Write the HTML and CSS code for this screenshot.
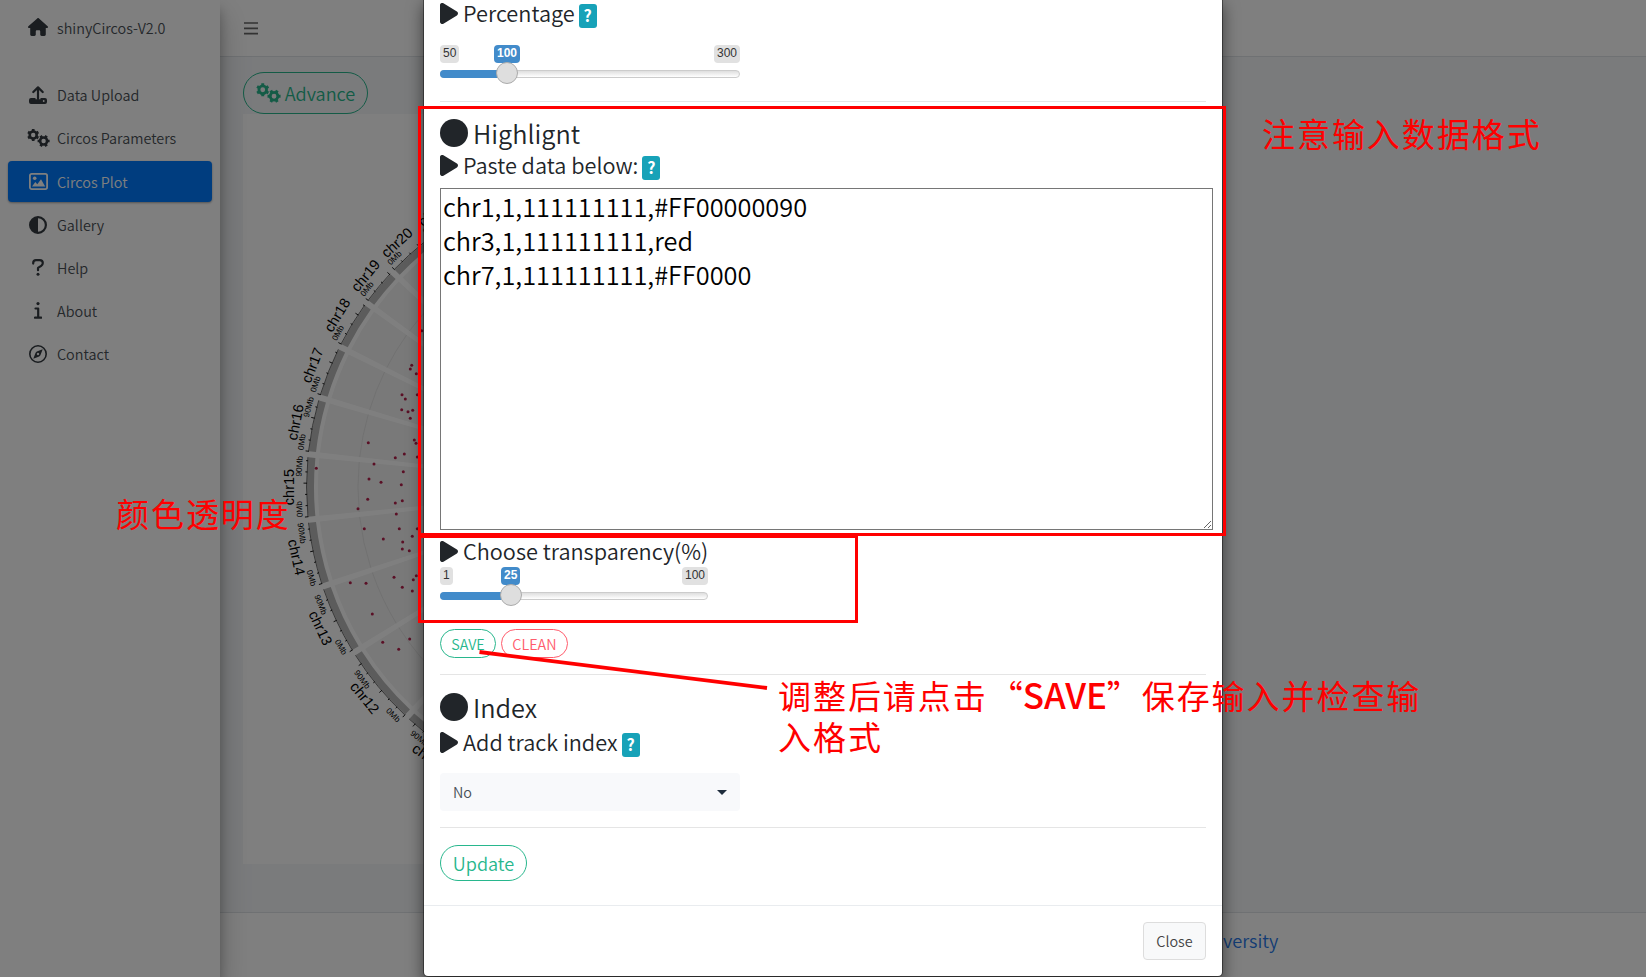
FILE: index.html
```html
<!DOCTYPE html>
<html lang="en">
<head>
<meta charset="utf-8">
<title>shinyCircos-V2.0</title>
<link rel="stylesheet" href="styles.css">
</head>
<body>
<svg class="defs" width="0" height="0" aria-hidden="true">
  <symbol id="play" viewBox="0 32 384 448"><path d="M73 39c-14.800-9.100-33.400-9.400-48.500-.9S0 62.600 0 80V432c0 17.400 9.400 33.400 24.500 41.900s33.700 8.100 48.500-.9L361 297c14.300-8.700 23-24.200 23-41s-8.700-32.200-23-41L73 39z"/></symbol>
  <symbol id="gears" viewBox="0 0 23 18">
    <g fill="none" stroke="currentColor">
      <circle cx="6.200" cy="6" r="3.500" stroke-width="2.600"/>
      <path d="M6.200 0v2.200M6.200 9.800V12M1 3l1.900 1.100M9.500 7.900L11.400 9M1 9l1.900-1.100M9.500 4.100L11.400 3" stroke-width="2.700"/>
      <circle cx="16.600" cy="12" r="3.500" stroke-width="2.600"/>
      <path d="M10.600 12h2.200M20.400 12h2.200M13.600 6.800l1.100 1.900M18.500 15.300l1.100 1.900M13.600 17.200l1.100-1.900M18.500 8.700l1.100-1.900" stroke-width="2.700"/>
    </g>
  </symbol>
</svg>
<div class="app">
  <aside class="sidebar">
    <div class="brand"><span class="ico"><svg width="20" height="18" viewBox="0 0 576 512"><path d="M575.800 255.500c0 18-15 32.100-32 32.100h-32l.7 160.200c0 2.700-.2 5.400-.5 8.100V472c0 22.100-17.900 40-40 40H392c-22.100 0-40-17.900-40-40V384c0-17.700-14.300-32-32-32H256c-17.700 0-32 14.300-32 32v88c0 22.100-17.900 40-40 40H104c-22.100 0-40-17.900-40-40V287.600H32c-18 0-32-14-32-32.100c0-9 3-17 10-24L266.400 8c7-7 15-8 22-8s15 2 21 7L564.800 231.500c8 7 12 15 11 24z"/></svg></span>shinyCircos-V2.0</div>
    <nav class="nav">
      <a class="item"><span class="ico"><svg width="18" height="18" viewBox="0 0 18 18"><path d="M2 12h4.500v1.200h5V12H16q2 0 2 2v2q0 2-2 2H2q-2 0-2-2v-2q0-2 2-2z"/><circle cx="14.700" cy="15" r=".9" fill="#fff"/><path d="M9 13V2M4.300 6L9 1.400 13.700 6" fill="none" stroke="currentColor" stroke-width="2.200" stroke-linecap="round" stroke-linejoin="round"/></svg></span>Data Upload</a>
      <a class="item"><span class="ico"><svg width="23" height="18"><use href="#gears"/></svg></span>Circos Parameters</a>
      <a class="item active"><span class="ico"><svg width="19" height="17" viewBox="0 0 19 17"><rect x=".9" y=".9" width="17.200" height="15.200" rx="1.800" fill="none" stroke="currentColor" stroke-width="1.800"/><circle cx="5.700" cy="5.300" r="1.800"/><path d="M3 13.500L6.300 9l2 2.200 3.700-5 4.200 7.300z"/></svg></span>Circos Plot</a>
      <a class="item"><span class="ico"><svg width="18" height="18" viewBox="0 0 512 512"><path fill-rule="evenodd" d="M448 256c0-106-86-192-192-192V448c106 0 192-86 192-192zM0 256a256 256 0 1 1 512 0A256 256 0 1 1 0 256z"/></svg></span>Gallery</a>
      <a class="item"><span class="ico"><svg width="12" height="17" viewBox="0 0 12 17"><path d="M1.200 4.600V4q0-2.800 2.800-2.800h3.700Q10.800 1.200 10.800 4q0 1.700-1.600 2.800L6 8.900v2.300" fill="none" stroke="currentColor" stroke-width="2.200" stroke-linecap="round" stroke-linejoin="round"/><circle cx="6" cy="15.200" r="1.500"/></svg></span>Help</a>
      <a class="item"><span class="ico"><svg width="8" height="17" viewBox="0 0 8 17"><circle cx="4" cy="1.600" r="1.600"/><path d="M1.500 6.500H4.200V15.400M1 15.600h6.200" fill="none" stroke="currentColor" stroke-width="2.200" stroke-linecap="round" stroke-linejoin="round"/></svg></span>About</a>
      <a class="item"><span class="ico"><svg width="18" height="18" viewBox="0 0 18 18"><circle cx="9" cy="9" r="8.200" fill="none" stroke="currentColor" stroke-width="1.600"/><path fill-rule="evenodd" d="M13.700 4.300l-2.300 5.900-1.200 1.200-5.900 2.300 2.300-5.900 1.200-1.200zM9 7.800a1.200 1.200 0 1 0 .01 0z"/></svg></span>Contact</a>
    </nav>
  </aside>
  <div class="page">
    <header class="topbar"><svg width="14" height="13" viewBox="0 0 14 13"><path d="M0 1h14M0 6.300h14M0 11.600h14" stroke="#666" stroke-width="1.700"/></svg></header>
    <main class="content">
      <button class="pill advance"><svg width="25" height="20"><use href="#gears"/></svg><span>Advance</span></button>
      <div class="plot">
        <svg id="circos" width="600" height="750" viewBox="243 114 600 750"></svg>
      </div>
    </main>
    <footer class="foot"><a>versity</a></footer>
  </div>
</div>
<div class="backdrop"></div>

<div class="modal">
  <div class="body">
    <div class="line first"><svg class="tri"><use href="#play"/></svg><span>Percentage</span><b class="q">?</b></div>
    <div class="slider s1">
      <div class="labels"><i>50</i><i class="val">100</i><i>300</i></div>
      <div class="track"><div class="fill"></div><div class="knob"></div></div>
    </div>
    <hr>
    <div class="head h1"><span class="dot"></span>Highlignt</div>
    <div class="line l2"><svg class="tri"><use href="#play"/></svg><span>Paste data below:</span><b class="q">?</b></div>
    <textarea class="data" spellcheck="false">chr1,1,111111111,#FF00000090
chr3,1,111111111,red
chr7,1,111111111,#FF0000</textarea>
    <div class="line l3"><svg class="tri"><use href="#play"/></svg><span>Choose transparency(%)</span></div>
    <div class="slider s2">
      <div class="labels"><i>1</i><i class="val">25</i><i>100</i></div>
      <div class="track"><div class="fill"></div><div class="knob"></div></div>
    </div>
    <div class="actions"><button class="pill small save">SAVE</button><button class="pill small clean">CLEAN</button></div>
    <hr>
    <div class="head h2"><span class="dot"></span>Index</div>
    <div class="line l4"><svg class="tri"><use href="#play"/></svg><span>Add track index</span><b class="q">?</b></div>
    <div class="select"><span>No</span><span class="caret"></span></div>
    <hr>
    <button class="pill update">Update</button>
  </div>
  <div class="mfoot"><button class="close">Close</button></div>
</div>

<div class="mark box1"></div>
<div class="mark box2"></div>
<svg class="arrow" width="300" height="50" viewBox="475 645 300 50"><path d="M479.500 652L767 688" stroke="#f00" stroke-width="3.800"/></svg>
<div class="note n1">注意输入数据格式</div>
<div class="note n2">颜色透明度</div>
<div class="note n3"><div>调整后请点击<span class="qt ql">“</span><span class="lat">SAVE</span><span class="qt">”</span>保存输入并检查输</div><div>入格式</div></div>
<script src="plot.js"></script>
</body>
</html>
```
FILE: styles.css
```css
* { box-sizing: border-box; }
body { margin: 0; width: 1646px; height: 977px; overflow: hidden; font: 14.4px/24px "Noto Sans CJK SC DemiLight", "Noto Sans CJK SC", sans-serif; color: #212529; }
.defs { position: absolute; }
svg { display: block; fill: currentColor; flex: none; }
button { font-family: inherit; margin: 0; }
.app { display: flex; height: 977px; }
.sidebar { width: 220px; background: #fff; color: #4a5056; box-shadow: 0 14px 28px rgba(0,0,0,.25), 0 10px 10px rgba(0,0,0,.22); z-index: 1; }
.brand { height: 57px; padding: 0 0 2px 18px; display: flex; align-items: center; }
.ico { width: 39px; display: flex; justify-content: center; color: #343a40; }
.nav { padding: 18px 8px 0; display: flex; flex-direction: column; gap: 3px; }
.item { height: 40px; padding-left: 10px; display: flex; align-items: center; border-radius: 4px; }
.ico svg { margin-left: 1px; margin-bottom: 1px; }
.active { height: 41px; color: #fff; background: #007bff; box-shadow: 0 1px 3px rgba(0,0,0,.12), 0 1px 2px rgba(0,0,0,.24); }
.active .ico { color: #fff; }
.page { flex: 1; display: flex; flex-direction: column; background: #f4f6f9; }
.topbar { height: 57px; background: #fff; border-bottom: 1px solid #dee2e6; padding: 22px 24px; }
.content { flex: 1; padding: 15px 23px 0; }
.pill { display: flex; align-items: center; justify-content: center; background: none; border: 1px solid #28b78d; color: #28b78d; border-radius: 30px; padding: 0; }
.advance { height: 42px; width: 125px; font-size: 18.1px; gap: 4px; padding: 0 0 1px; }
.plot { width: 760px; height: 750px; background: #fff; }
.foot { height: 65px; border-top: 1px solid #dee2e6; background: #fff; font-size: 18.2px; padding: 15px 0 0 1003px; }
.foot a { color: #2879e8; }
.backdrop { position: absolute; inset: 0; background: rgba(0,0,0,.5); z-index: 2; }

.modal { position: absolute; z-index: 3; left: 423px; top: -4px; width: 800px; height: 981px; background: #fff; background-clip: padding-box; border: 1px solid rgba(0,0,0,.4); border-radius: 5px; box-shadow: 0 8px 16px rgba(0,0,0,.5); display: flex; flex-direction: column; }
.body { padding: 3px 16px 0; height: 908px; display: flex; flex-direction: column; align-items: flex-start; }
hr { margin: 0; width: 766px; height: 1px; flex: none; border: 0; background: #e5e5e5; }
.line { display: flex; height: 28px; font-size: 21.700px; line-height: 28px; align-items: center; }
.line span { margin-bottom: 2px; }
.tri { width: 18px; height: 21px; margin-right: 5px; margin-bottom: 1px; color: #212529; }
.q { width: 18px; height: 24px; border-radius: 3px; background: #17a2b8; color: #fff; font: 700 16px/22px "Noto Sans CJK SC", sans-serif; text-align: center; margin: 4px 0 0 4px; }
.slider { display: flex; flex-direction: column; font: 12px/15px "Liberation Sans", sans-serif; }
.s1 { margin-top: 17px; width: 300px; height: 56px; }
.s2 { margin-top: 1px; width: 268px; height: 62px; }
.labels { display: grid; grid-template-columns: 1fr auto 1fr; height: 18px; position: relative; }
.labels i { font-style: normal; background: #e1e1e1; color: #333; border-radius: 4px; padding: 1px 3px; height: 18px; justify-self: start; }
.labels i:last-child { justify-self: end; grid-column: 3; }
.labels .val { position: absolute; background: #428bca; color: #fff; font-weight: 700; }
.s1 .val { left: 54px; width: 26px; }
.s2 .val { left: 61px; width: 19px; }
.track { position: relative; margin-top: 7px; height: 8px; border: 1px solid #ccc; border-radius: 8px; background: linear-gradient(#dedede, #fff); }
.fill { position: absolute; left: -1px; top: -1px; height: 8px; border-radius: 8px 0 0 8px; background: #428bca; width: 67px; }
.knob { position: absolute; width: 22px; height: 22px; border-radius: 50%; background: #dedede; border: 1px solid #ababab; top: -9px; left: 55px; }
.s2 .knob { left: 59px; }
.head { display: flex; align-items: center; gap: 5px; font-size: 25.300px; line-height: 34px; height: 34px; }
.dot { width: 28px; height: 28px; border-radius: 50%; background: #212529; }
.h1 { margin-top: 14px; }
.l2 { margin-top: 2px; }
.data { width: 773px; height: 342px; flex: none; margin: 8px 0 0; padding: 0 2px; border: 1px solid #767676; font: 25.350px/34px "Noto Sans CJK SC DemiLight", "Noto Sans CJK SC", sans-serif; color: #000; outline: 0; }
.l3 { margin-top: 8px; }
.actions { display: flex; gap: 5px; height: 45px; }
.small { height: 29px; width: 56px; font-size: 14.400px; }
.clean { width: 67px; color: #ff5c6c; border-color: #ff5c6c; }
.h2 { margin-top: 15px; }
.l4 { margin-top: 5px; }
.select { margin: 16px 0; width: 300px; height: 38px; border-radius: 4px; background: #f8f9fb; display: flex; align-items: center; justify-content: space-between; padding: 0 13px; color: #495057; }
.caret { border: 5px solid transparent; border-top-color: #1f2d3d; border-bottom: 0; }
.update { margin-top: 17px; width: 87px; height: 36px; font-size: 18.1px; padding-bottom: 1px; }
.mfoot { border-top: 1px solid #e9ecef; flex: 1; display: flex; justify-content: flex-end; padding: 16px 16px 0; }
.close { width: 63px; height: 38px; background: #f8f9fa; border: 1px solid #ddd; border-radius: 4px; color: #444; font-size: 14.400px; padding: 0 0 2px; }

.mark { position: absolute; z-index: 4; border: 3px solid #f00; }
.box1 { left: 418px; top: 106px; width: 808px; height: 430px; }
.box2 { left: 418px; top: 535px; width: 440px; height: 88px; }
.arrow { position: absolute; z-index: 5; left: 475px; top: 645px; }
.note { position: absolute; z-index: 5; color: #f00; font-family: "Noto Sans CJK SC", sans-serif; font-size: 33px; letter-spacing: 1.950px; line-height: 41px; white-space: nowrap; }
.n1 { left: 1262px; top: 113px; }
.n2 { left: 116px; top: 493px; }
.n3 { left: 778px; top: 674px; }
.lat { letter-spacing: 0; font-weight: 500; display: inline-block; width: 84px; font-size: 35px; line-height: 40px; }
.qt { display: inline-block; width: 35px; letter-spacing: 0; }
.ql { text-align: right; }
```
FILE: plot.js
```js
const svg = document.getElementById('circos');
const CX = 620, CY = 487, R = 313;
// Sector boundaries in degrees above the left horizontal
const gaps = [59, 51.8, 43.4, 36, 26.6, 16.6, 6, -6, -18.5, -31.9, -47.2, -62];
const names = ['chrX', 'chr20', 'chr19', 'chr18', 'chr17', 'chr16', 'chr15', 'chr14', 'chr13', 'chr12', 'chr11'];
// Angular distance of the 90Mb tick from the upper end of each sector
const mark90 = { chr16: 1.65, chr15: 1.75, chr14: 1.7, chr13: 2.4, chr12: 4.3, chr11: 3.7 };
const at = (r, a) => {
  const t = a * Math.PI / 180;
  return [CX - r * Math.cos(t), CY - r * Math.sin(t)];
};
const add = (tag, attrs, text) => {
  const el = document.createElementNS('http://www.w3.org/2000/svg', tag);
  for (const k in attrs) el.setAttribute(k, attrs[k]);
  if (text) el.textContent = text;
  svg.append(el);
};
const ring = (r1, r2, a, b, fill) => {
  const p = [at(r1, a), at(r1, b), at(r2, b), at(r2, a)];
  add('path', { fill, d: `M${p[0]}A${r1} ${r1} 0 0 0 ${p[1]}L${p[2]}A${r2} ${r2} 0 0 1 ${p[3]}Z` });
};
const label = (s, r, a, size) => {
  const [x, y] = at(r, a);
  const rot = a > -5 ? a - 90 : a + 90;
  add('text', {
    x, y, dy: size * .35, 'font-size': size, 'text-anchor': 'middle', fill: '#000',
    'font-family': 'Liberation Sans, sans-serif', transform: `rotate(${-rot - 180 + (a > -5 ? 180 : 180)} ${x} ${y})`
  }, s);
  svg.lastChild.setAttribute('transform', `rotate(${rot} ${x} ${y})`);
};
names.forEach((n, i) => {
  const a = gaps[i] - .55, b = gaps[i + 1] + .55;
  ring(R, R - 7, a, b, '#b8b8b8');
  ring(R - 11, 120, a, b, '#f2f2f2');
  const [x1, y1] = at(262, a), [x2, y2] = at(262, b);
  add('path', { d: `M${x1} ${y1}A262 262 0 0 0 ${x2} ${y2}`, fill: 'none', stroke: '#dedede', 'stroke-width': .8 });
  const [o1, p1] = at(R + .5, a), [o2, p2] = at(R + .5, b);
  add('path', { d: `M${o1} ${p1}A${R} ${R} 0 0 0 ${o2} ${p2}`, fill: 'none', stroke: '#333', 'stroke-width': .7 });
  for (let t = b, k = 0; t < a; t += 2.05, k++) {
    add('path', { d: `M${at(R, t)}L${at(R + (k % 3 ? 2 : 3.500), t)}`, stroke: '#000', 'stroke-width': .9 });
  }
  label(n, 331, (a + b) / 2, 14.500);
  label('0Mb', 321.500, b + 1.500, 8.300);
  if (mark90[n]) label('90Mb', 321.500, a - mark90[n], 8.300);
});
[[421.7,330.7],[411.700,365.300],[410.300,369],[416.300,373.700],[402,394.700],[405.300,399],[417.300,394.700],[401.700,409.700],[408,411.700],[412.700,410.300],[410.300,418.300],[414.300,440],[416,443.300],[368.300,442.700],[404.300,454],[395.300,457.700],[417.300,457],[374,464],[316.300,468.300],[403.300,471.700],[369,479],[381,482.300],[401.300,484.700],[367.700,499.300],[402.300,500.700],[395.300,503],[358,508.700],[396.300,514],[364.300,528.700],[399.300,528.700],[417.300,528.700],[412.300,536.300],[383.300,539],[402.700,542],[402.300,549],[409.300,550.700],[394,577.300],[416.300,575.700],[413.300,579.700],[350.300,582.700],[366,583.300],[402.300,587.300],[412.300,591],[372.300,614],[409.700,639],[382.700,642.300],[398.700,649.300]]
  .forEach(([cx, cy]) => add('circle', { cx, cy, r: 1.500, fill: '#b51f4b' }));
```
